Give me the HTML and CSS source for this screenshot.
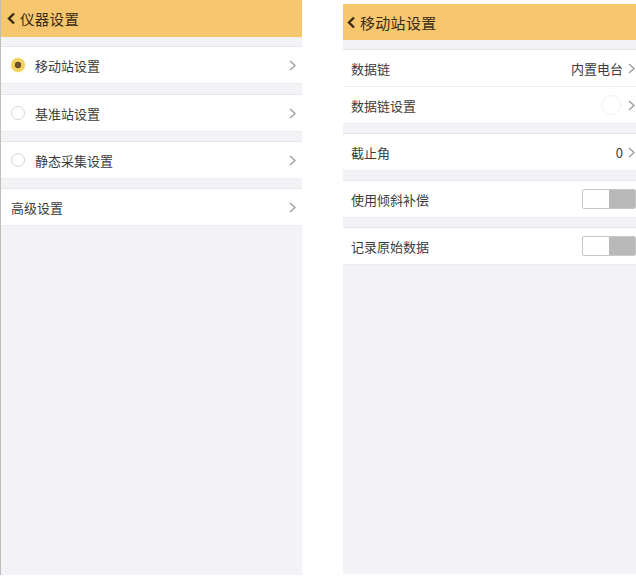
FILE: index.html
```html
<!DOCTYPE html>
<html lang="zh-CN">
<head>
    <meta charset="UTF-8">
    <meta name="viewport" content="width=device-width, initial-scale=1.0">
    <title>仪器设置</title>
    <link rel="stylesheet" href="styles.css">
</head>
<body>
    <div class="page">

        <div class="screen left">
            <div class="header">
                <svg class="back" width="9" height="13" viewBox="0 0 9 13"><polyline points="7,1.5 2,6.5 7,11.5" /></svg>
                <span class="title">仪器设置</span>
            </div>

            <div class="group">
                <div class="row">
                    <span class="radio on"></span>
                    <span class="label">移动站设置</span>
                    <svg class="arrow" width="7" height="11" viewBox="0 0 7 11"><polyline points="1,1 6,5.5 1,10" /></svg>
                </div>
            </div>
            <div class="group">
                <div class="row">
                    <span class="radio"></span>
                    <span class="label">基准站设置</span>
                    <svg class="arrow" width="7" height="11" viewBox="0 0 7 11"><polyline points="1,1 6,5.5 1,10" /></svg>
                </div>
            </div>
            <div class="group">
                <div class="row">
                    <span class="radio"></span>
                    <span class="label">静态采集设置</span>
                    <svg class="arrow" width="7" height="11" viewBox="0 0 7 11"><polyline points="1,1 6,5.5 1,10" /></svg>
                </div>
            </div>
            <div class="group">
                <div class="row">
                    <span class="label">高级设置</span>
                    <svg class="arrow" width="7" height="11" viewBox="0 0 7 11"><polyline points="1,1 6,5.5 1,10" /></svg>
                </div>
            </div>
        </div>

        <div class="screen right">
            <div class="header">
                <svg class="back" width="9" height="13" viewBox="0 0 9 13"><polyline points="7,1.5 2,6.5 7,11.5" /></svg>
                <span class="title">移动站设置</span>
            </div>

            <div class="group">
                <div class="row">
                    <span class="label">数据链</span>
                    <span class="value">内置电台</span>
                    <svg class="arrow" width="7" height="11" viewBox="0 0 7 11"><polyline points="1,1 6,5.5 1,10" /></svg>
                </div>
                <div class="row">
                    <span class="label">数据链设置</span>
                    <span class="spinner"></span>
                    <svg class="arrow" width="7" height="11" viewBox="0 0 7 11"><polyline points="1,1 6,5.5 1,10" /></svg>
                </div>
            </div>
            <div class="group">
                <div class="row">
                    <span class="label">截止角</span>
                    <span class="value">0</span>
                    <svg class="arrow" width="7" height="11" viewBox="0 0 7 11"><polyline points="1,1 6,5.5 1,10" /></svg>
                </div>
            </div>
            <div class="group">
                <div class="row">
                    <span class="label">使用倾斜补偿</span>
                    <span class="switch"></span>
                </div>
            </div>
            <div class="group">
                <div class="row">
                    <span class="label">记录原始数据</span>
                    <span class="switch"></span>
                </div>
            </div>
        </div>

    </div>
</body>
</html>
```

FILE: styles.css
```css
* {
    box-sizing: border-box;
    font-family: "Noto Sans CJK SC", "Noto Sans", sans-serif;
}
body {
    margin: 0;
    background: #ffffff;
    overflow: hidden;
}
.page {
    display: flex;
    gap: 41px;
    height: 578px;
}
.screen {
    background: #f3f2f6;
    display: flex;
    flex-direction: column;
    overflow: hidden;
}
.left {
    width: 302px;
    height: 575px;
    border-left: 1px solid #b9c2b6;
}
.right {
    width: 293px;
    height: 570px;
    margin-top: 4px;
}
.header {
    background: #f6c76f;
    height: 37px;
    display: flex;
    align-items: center;
    padding-left: 6px;
    gap: 4px;
    flex-shrink: 0;
}
.right .header {
    height: 36px;
    padding-left: 4px;
}
.back polyline {
    fill: none;
    stroke: #3a2c14;
    stroke-width: 2.4;
}
.title {
    font-size: 14.5px;
    color: #3a2c14;
    letter-spacing: 0.3px;
}
.right .title {
    font-size: 15px;
}
.group {
    margin-top: 9px;
    background: #ffffff;
    border-top: 1px solid #e6e6e9;
    border-bottom: 1px solid #ececef;
    flex-shrink: 0;
}
.left .group:first-of-type,
.right .group:first-of-type {
    margin-top: 10px;
}
.left .group:nth-of-type(3) {
    margin-top: 10px;
}
.row {
    height: 36px;
    display: flex;
    align-items: center;
    padding: 0 6px 0 10px;
}
.row + .row {
    border-top: 1px solid #ececef;
    height: 37px;
}
.right .row {
    padding: 0 1px 0 8px;
}
.label {
    font-size: 13px;
    color: #3c3c3c;
    flex: 1;
}
.value {
    font-size: 13px;
    color: #3c3c3c;
    margin-right: 5px;
}
.arrow polyline {
    fill: none;
    stroke: #9b9b9b;
    stroke-width: 1.3;
}
.radio {
    width: 14px;
    height: 14px;
    border-radius: 50%;
    border: 1px solid #d6d6d6;
    background: #ffffff;
    margin-right: 10px;
    flex-shrink: 0;
}
.radio.on {
    border: none;
    background: radial-gradient(circle, #6b4f2e 0, #6b4f2e 3px, #f1d35b 3.6px);
    box-shadow: 0 0 2px #f6e08c;
}
.spinner {
    width: 20px;
    height: 20px;
    border-radius: 50%;
    border: 1px solid #f1f1f1;
    margin-right: 7px;
}
.switch {
    width: 54px;
    height: 20px;
    margin-right: -1px;
    border: 1px solid #c8c8c8;
    border-radius: 2px;
    background: linear-gradient(to right, #ffffff 0, #ffffff 26px, #b9b9b9 26px);
}
```
